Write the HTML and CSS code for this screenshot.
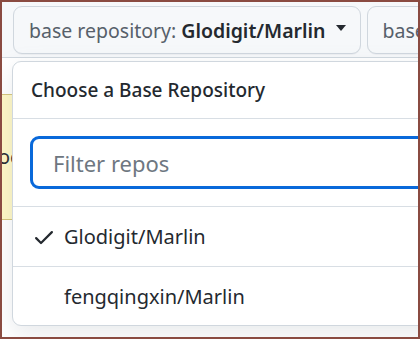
FILE: index.html
```html
<!DOCTYPE html>
<html lang="en">
<head>
    <meta charset="UTF-8">
    <meta name="viewport" content="width=device-width, initial-scale=1.0">
    <title>Compare changes</title>
    <link rel="stylesheet" href="styles.css">
</head>
<body>
    <div class="frame">
        <div class="range-bar">
            <button class="btn">base repository: <b>Glodigit/Marlin</b> <span class="caret"></span></button>
            <button class="btn">base: master <span class="caret"></span></button>
        </div>

        <div class="page">
            <div class="flash">ocument</div>
        </div>

        <div class="menu">
            <div class="menu-title">Choose a Base Repository</div>
            <div class="menu-filter">
                <input type="text" class="filter-input" placeholder="Filter repos">
            </div>
            <div class="menu-item">
                <svg class="check" viewBox="0 0 16 16" width="24" height="24"><path d="M13.78 4.22a.75.75 0 0 1 0 1.06l-7.25 7.25a.75.75 0 0 1-1.06 0L2.22 9.28a.75.75 0 0 1 1.06-1.06L6 10.94l6.72-6.72a.75.75 0 0 1 1.06 0Z"></path></svg>
                <span>Glodigit/Marlin</span>
            </div>
            <div class="menu-item">
                <span class="no-check"></span>
                <span>fengqingxin/Marlin</span>
            </div>
        </div>
    </div>
</body>
</html>
```

FILE: styles.css
```css
html, body { margin: 0; padding: 0; }
body { font-family: "Segoe UI", "Noto Sans", sans-serif; color: #24292f; }
.frame { position: relative; width: 420px; height: 339px; box-sizing: border-box; border: 2px solid #8a4b41; background: #f6f8fa; overflow: hidden; }

.range-bar { display: flex; gap: 6px; padding: 4px 0 0 11px; height: 55px; box-sizing: border-box; white-space: nowrap; }
.btn { display: flex; align-items: center; gap: 8px; height: 48px; padding: 0 14px 0 15px; font: inherit; font-size: 19.5px; color: #57606a; background: #f6f8fa; border: 1px solid #d0d7de; border-radius: 9px; box-shadow: 0 1px 0 rgba(31, 35, 40, 0.04); white-space: nowrap; flex-shrink: 0; }
.btn b { color: #24292f; font-weight: 600; margin-left: -3px; }
.caret { display: inline-block; width: 0; height: 0; border-top: 6px solid #24292f; border-left: 5px solid transparent; border-right: 5px solid transparent; margin: -4px 0 0 2px; }

.page { background: #fff; border-top: 1px solid #d0d7de; height: 300px; padding-top: 36px; box-sizing: border-box; }
.flash { background: #fff8c5; border-top: 1px solid #d4c57a; border-bottom: 1px solid #d4c57a; height: 124px; line-height: 124px; font-size: 20px; margin-left: -4px; }

.menu { position: absolute; top: 59px; left: 10px; width: 520px; background: #fff; border: 1px solid #d0d7de; border-radius: 9px; box-shadow: 0 8px 24px rgba(140, 149, 159, 0.2); }
.menu-title { height: 56px; padding: 0 18px; display: flex; align-items: center; font-size: 19px; font-weight: 500; border-bottom: 1px solid #d8dee4; }
.menu-filter { padding: 17px 17px; border-bottom: 1px solid #d8dee4; }
.filter-input { display: block; width: 100%; height: 53px; box-sizing: border-box; padding: 0 20px; font: inherit; font-size: 22px; color: #24292f; border: 3px solid #0969da; border-radius: 9px; outline: none; }
.filter-input::placeholder { color: #6e7781; }
.menu-item { display: flex; align-items: center; gap: 8px; height: 59px; padding: 0 18px 0 19px; font-size: 20px; border-bottom: 1px solid #d8dee4; }
.menu-item:last-child { border-bottom: none; height: 58px; }
.check { fill: #24292f; flex-shrink: 0; }
.no-check { width: 24px; flex-shrink: 0; }
```
